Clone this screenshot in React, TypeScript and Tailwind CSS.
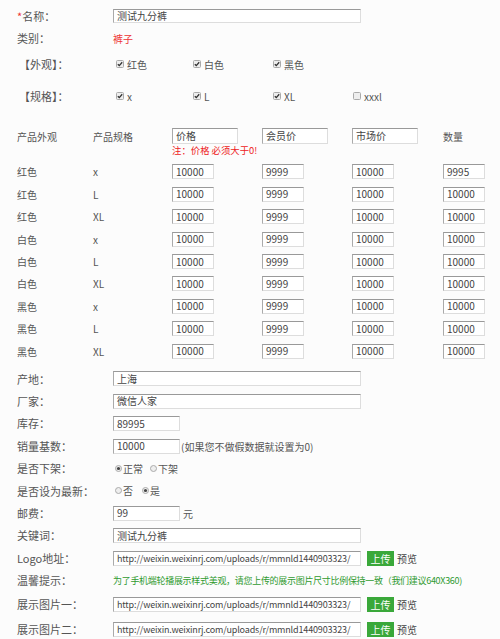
const font = { fontFamily: '"Noto Sans CJK SC", "Noto Sans", sans-serif' };

function Check({ on = true }: { on?: boolean }) {
  return (
    <svg width="8" height="8" viewBox="0 0 8 8" className="shrink-0">
      <rect x="0.5" y="0.5" width="7" height="7" rx="1" fill="#eee" stroke="#aaa" />
      {on && <path d="M1.8 4.2 L3.3 5.6 L6.2 2.3" fill="none" stroke="#333" strokeWidth="1.3" />}
    </svg>
  );
}

function Radio({ on }: { on?: boolean }) {
  return (
    <svg width="7" height="7" viewBox="0 0 7 7" className="shrink-0">
      <circle cx="3.5" cy="3.5" r="3" fill="#eee" stroke="#aaa" />
      {on && <circle cx="3.5" cy="3.5" r="1.6" fill="#444" />}
    </svg>
  );
}

function Field({ value, w, h = 'h-[15px]', text = 'text-[10px]' }: { value: string; w: string; h?: string; text?: string }) {
  return (
    <div
      className={`${w} ${h} ${text} shrink-0 flex items-center overflow-hidden whitespace-nowrap bg-white border border-[#ddd] border-t-[#999] border-l-[#aaa] pl-[3px] text-[#444] leading-none`}
    >
      {value}
    </div>
  );
}

function Row({ label, h = 'h-[22.4px]', children }: { label: React.ReactNode; h?: string; children?: React.ReactNode }) {
  return (
    <div className={`flex items-center ${h}`}>
      <div className="w-[96px] shrink-0 text-[11px] text-[#555]">{label}</div>
      <div className="flex items-center">{children}</div>
    </div>
  );
}

const skus = [
  ['红色', 'x', '9995'],
  ['红色', 'L', '10000'],
  ['红色', 'XL', '10000'],
  ['白色', 'x', '10000'],
  ['白色', 'L', '10000'],
  ['白色', 'XL', '10000'],
  ['黑色', 'x', '10000'],
  ['黑色', 'L', '10000'],
  ['黑色', 'XL', '10000'],
];

const url = 'http://weixin.weixinrj.com/uploads/r/mmnld1440903323/';

function Upload() {
  return (
    <>
      <Field value={url} w="w-[248px]" text="text-[9px] tracking-[-0.15px]" />
      <span className="ml-[6px] w-[27px] h-[15px] flex items-center justify-center bg-[#3aa83a] text-white text-[10px]">上传</span>
      <span className="ml-[3px] text-[10px] text-[#444]">预览</span>
    </>
  );
}

export default function App() {
  return (
    <div className="w-[500px] h-[639px] overflow-hidden bg-[#fcfcfc] pl-[17px] pt-[8px]" style={font}>
      <Row label={<><span className="text-[#e33]">*</span>名称：</>} h="h-[16px]">
        <Field value="测试九分裤" w="w-[248px]" h="h-[14px]" />
      </Row>
      <Row label="类别：" h="h-[28px]">
        <span className="text-[10px] text-[#e33]">裤子</span>
      </Row>
      <Row label={<span className="pl-[2px]">【外观】：</span>} h="h-[24px]">
        {[['红色', 'w-[77px]'], ['白色', 'w-[80px]'], ['黑色', 'w-[80px]']].map(([c, w]) => (
          <div key={c} className={`${w} flex items-center gap-[3px] pl-[3px] text-[10px] text-[#555]`}>
            <Check />
            {c}
          </div>
        ))}
      </Row>
      <Row label={<span className="pl-[2px]">【规格】：</span>} h="h-[40px]">
        {[['x', 'w-[77px]', true], ['L', 'w-[80px]', true], ['XL', 'w-[80px]', true], ['xxxl', 'w-[60px]', false]].map(([s, w, on]) => (
          <div key={s as string} className={`${w} flex items-center gap-[3px] pl-[3px] text-[10px] text-[#555]`}>
            <Check on={on as boolean} />
            {s}
          </div>
        ))}
      </Row>

      {/* 规格价格表 */}
      <div className="mt-[12px] grid grid-cols-[76px_79px_90px_90px_91px_50px] items-center h-[16px] text-[10px] text-[#555]">
        <span>产品外观</span>
        <span>产品规格</span>
        <Field value="价格" w="w-[66px]" h="h-[16px]" />
        <Field value="会员价" w="w-[66px]" h="h-[16px]" />
        <Field value="市场价" w="w-[66px]" h="h-[16px]" />
        <span>数量</span>
      </div>
      <div className="h-[12px] pl-[155px] text-[9.4px] leading-[12px] text-[#e22]">注：价格 必须大于0!</div>
      <div className="mt-[4.8px]">
        {skus.map(([c, s, q], i) => (
          <div key={i} className="grid grid-cols-[76px_79px_90px_90px_91px_50px] items-center h-[22.4px] text-[10px] text-[#555]">
            <span>{c}</span>
            <span>{s}</span>
            <Field value="10000" w="w-[42px]" />
            <Field value="9999" w="w-[42px]" />
            <Field value="10000" w="w-[42px]" />
            <Field value={q} w="w-[42px]" />
          </div>
        ))}
      </div>

      <div className="mt-[5.4px]">
        <Row label="产地：">
          <Field value="上海" w="w-[248px]" />
        </Row>
        <Row label="厂家：">
          <Field value="微信人家" w="w-[248px]" />
        </Row>
        <Row label="库存：">
          <Field value="89995" w="w-[67px]" />
        </Row>
        <Row label="销量基数：">
          <Field value="10000" w="w-[67px]" />
          <span className="ml-[1px] text-[10px] text-[#555]">(如果您不做假数据就设置为0)</span>
        </Row>
        <Row label="是否下架：">
          <div className="flex items-center gap-[1px] pl-[2px] w-[37px] text-[10px] text-[#555]">
            <Radio on />正常
          </div>
          <div className="flex items-center gap-[1px] text-[10px] text-[#555]">
            <Radio />下架
          </div>
        </Row>
        <Row label="是否设为最新：">
          <div className="flex items-center gap-[1px] pl-[2px] w-[29px] text-[10px] text-[#555]">
            <Radio />否
          </div>
          <div className="flex items-center gap-[1px] text-[10px] text-[#555]">
            <Radio on />是
          </div>
        </Row>
        <Row label="邮费：">
          <Field value="99" w="w-[67px]" />
          <span className="ml-[3px] text-[10px] text-[#555]">元</span>
        </Row>
        <Row label="关键词：">
          <Field value="测试九分裤" w="w-[248px]" />
        </Row>
        <Row label="Logo地址：">
          <Upload />
        </Row>
        <Row label="温馨提示：" h="h-[23px]">
          <span className="text-[9px] tracking-[-0.3px] text-[#2f9a2f] whitespace-nowrap">
            为了手机端轮播展示样式美观，请您上传的展示图片尺寸比例保持一致（我们建议640X360)
          </span>
        </Row>
        <Row label="展示图片一：" h="h-[25px]">
          <Upload />
        </Row>
        <Row label="展示图片二：" h="h-[24px]">
          <Upload />
        </Row>
      </div>
    </div>
  );
}
